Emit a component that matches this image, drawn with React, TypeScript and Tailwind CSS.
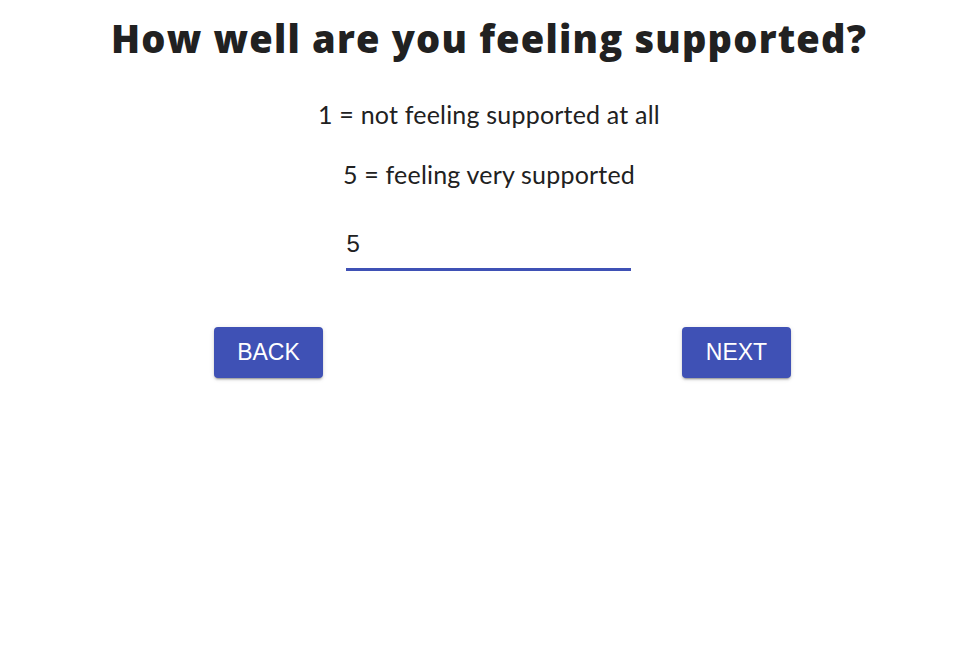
import React from "react";

// survey step: support rating

const App: React.FC = () => {
  return (
    <div className="min-h-[650px] w-full bg-white text-[#212121]">
      <div className="flex flex-col items-center pt-[14px]">
        <h1 className="font-['Open_Sans',sans-serif] text-[38px] font-extrabold leading-[48px] tracking-[1.2px]">
          How well are you feeling supported?
        </h1>
        <p className="mt-[38px] font-['Lato',sans-serif] text-[25px] leading-[28px] tracking-[0.2px]">
          1 = not feeling supported at all
        </p>
        <p className="mt-[32px] font-['Lato',sans-serif] text-[25px] leading-[28px] tracking-[0.2px]">
          5 = feeling very supported
        </p>
        <div className="mr-[2px] mt-[41px] w-[285px] border-b-[3px] border-[#3f51b5]">
          <input
            defaultValue="5"
            className="w-full bg-transparent pb-[9px] pl-[1px] font-['Liberation_Sans',Arial,sans-serif] text-[24px] leading-[30px] text-[#212121] outline-none"
          />
        </div>
      </div>
      <div className="mt-[56px] flex justify-between pl-[214px] pr-[187px]">
        <button className="h-[51px] w-[109px] rounded-[4px] bg-[#3f51b5] font-['Liberation_Sans',Arial,sans-serif] text-[23px] text-white shadow-[0_3px_1px_-2px_rgba(0,0,0,0.2),0_2px_2px_0_rgba(0,0,0,0.14),0_1px_5px_0_rgba(0,0,0,0.12)]">
          BACK
        </button>
        <button className="h-[51px] w-[109px] rounded-[4px] bg-[#3f51b5] font-['Liberation_Sans',Arial,sans-serif] text-[23px] text-white shadow-[0_3px_1px_-2px_rgba(0,0,0,0.2),0_2px_2px_0_rgba(0,0,0,0.14),0_1px_5px_0_rgba(0,0,0,0.12)]">
          NEXT
        </button>
      </div>
    </div>
  );
};

export default App;
